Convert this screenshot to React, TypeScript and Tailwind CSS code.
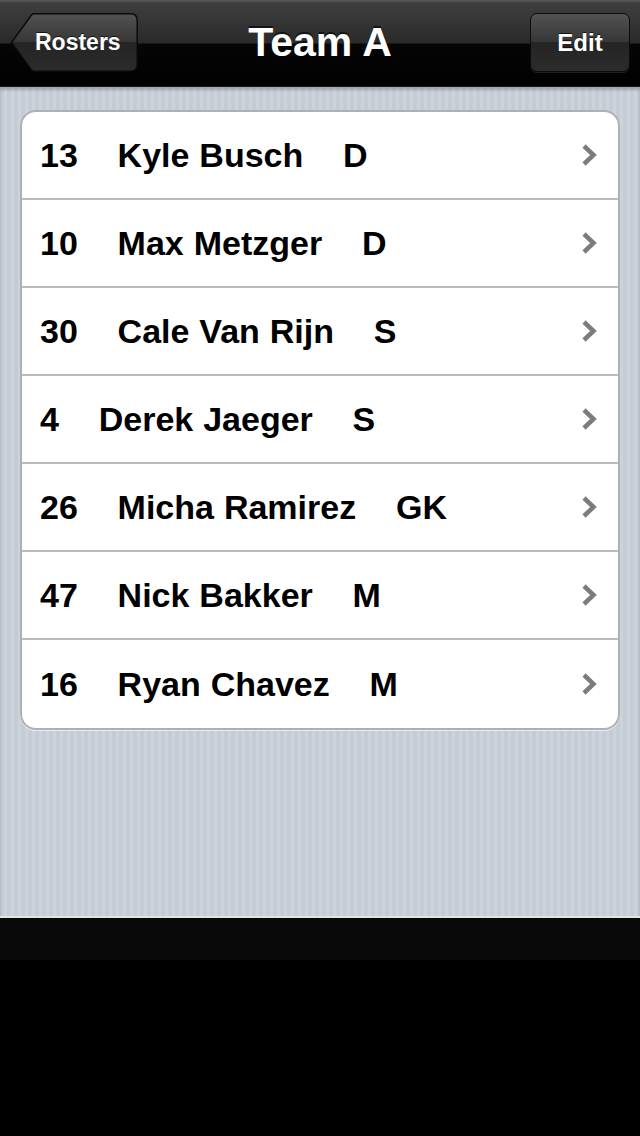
import React from "react";

// --- Data ---
const players = [
  "13    Kyle Busch    D",
  "10    Max Metzger    D",
  "30    Cale Van Rijn    S",
  "4    Derek Jaeger    S",
  "26    Micha Ramirez    GK",
  "47    Nick Bakker    M",
  "16    Ryan Chavez    M",
];

function BackButton({ label }: { label: string }) {
  return (
    <button type="button" className="relative w-[128px] h-[59px] text-left">
      <svg className="absolute inset-0" width="128" height="59" viewBox="0 0 128 59">
        <defs>
          <linearGradient id="backGrad" x1="0" y1="0" x2="0" y2="1">
            <stop offset="0" stopColor="#525252" />
            <stop offset="0.5" stopColor="#363636" />
            <stop offset="0.5" stopColor="#242424" />
            <stop offset="1" stopColor="#2c2c2c" />
          </linearGradient>
        </defs>
        <path
          d="M1.5 29.5 L21.5 2 Q22.5 0.8 24.5 0.8 H120.5 Q127.2 0.8 127.2 7.5 V51.5 Q127.2 58.2 120.5 58.2 H24.5 Q22.5 58.2 21.5 57 Z"
          fill="url(#backGrad)"
          stroke="#0b0b0b"
          strokeWidth="1.5"
        />
      </svg>
      <span className="relative block pl-[25px] text-[23px] font-bold text-white [text-shadow:0_-1px_0_rgba(0,0,0,0.7)]">
        {label}
      </span>
    </button>
  );
}

function EditButton({ label }: { label: string }) {
  return (
    <button
      type="button"
      className="w-[100px] h-[59px] rounded-[7px] border border-[#0b0b0b] bg-[linear-gradient(180deg,#525252_0%,#363636_50%,#242424_50%,#2c2c2c_100%)] text-[24px] font-bold text-white [text-shadow:0_-1px_0_rgba(0,0,0,0.7)] shadow-[0_1px_0_rgba(255,255,255,0.12)]"
    >
      {label}
    </button>
  );
}

function Chevron() {
  return (
    <svg width="16" height="24" viewBox="0 0 16 24" className="shrink-0">
      <polyline
        points="3,3 12.5,12 3,21"
        fill="none"
        stroke="#7c7c7c"
        strokeWidth="4.5"
        strokeLinejoin="miter"
      />
    </svg>
  );
}

export default function App() {
  return (
    <div className="w-[640px] h-[1136px] flex flex-col bg-black font-['Liberation_Sans',Arial,sans-serif]">
      {/* Navigation bar */}
      <header className="relative h-[87px] shrink-0 flex items-center justify-between px-[10px] pb-[1px] bg-[linear-gradient(180deg,#5e5e5e_0px,#3e3e3e_3px,#2a2a2a_43px,#060606_44px,#000_86px)] border-b border-[#1c1c1c]">
        <BackButton label="Rosters" />
        <h1 className="absolute left-0 right-0 top-[18px] text-center text-[41px] leading-[48px] font-bold text-white [text-shadow:0_-2px_0_rgba(0,0,0,0.6)] pointer-events-none">
          Team A
        </h1>
        <EditButton label="Edit" />
      </header>

      {/* Grouped table */}
      <main className="h-[831px] shrink-0 px-[20px] pt-[23px] bg-[image:repeating-linear-gradient(90deg,#c5ccd4_0px,#c5ccd4_4px,#cdd3da_4px,#cdd3da_7px)] shadow-[inset_0_3px_3px_rgba(0,0,0,0.2)] border-b-2 border-[#dfe3e7]">
        <div className="rounded-[16px] border-2 border-[#acb1b6] bg-white overflow-hidden shadow-[0_1px_0_rgba(255,255,255,0.6)]">
          {players.map((p, i) => (
            <div
              key={p}
              className={`h-[88px] flex items-center pl-[18px] pr-[21px] ${
                i < players.length - 1 ? "border-b-2 border-[#bcbcbc]" : "h-[86px]"
              }`}
            >
              <span className="flex-1 whitespace-pre text-[34px] font-bold text-black [word-spacing:0.5px]">{p}</span>
              <Chevron />
            </div>
          ))}
        </div>
      </main>

      {/* Bottom area */}
      <div className="flex-1 flex flex-col">
        <div className="h-[42px] bg-[#090909]" />
        <div className="flex-1 bg-black" />
      </div>
    </div>
  );
}
